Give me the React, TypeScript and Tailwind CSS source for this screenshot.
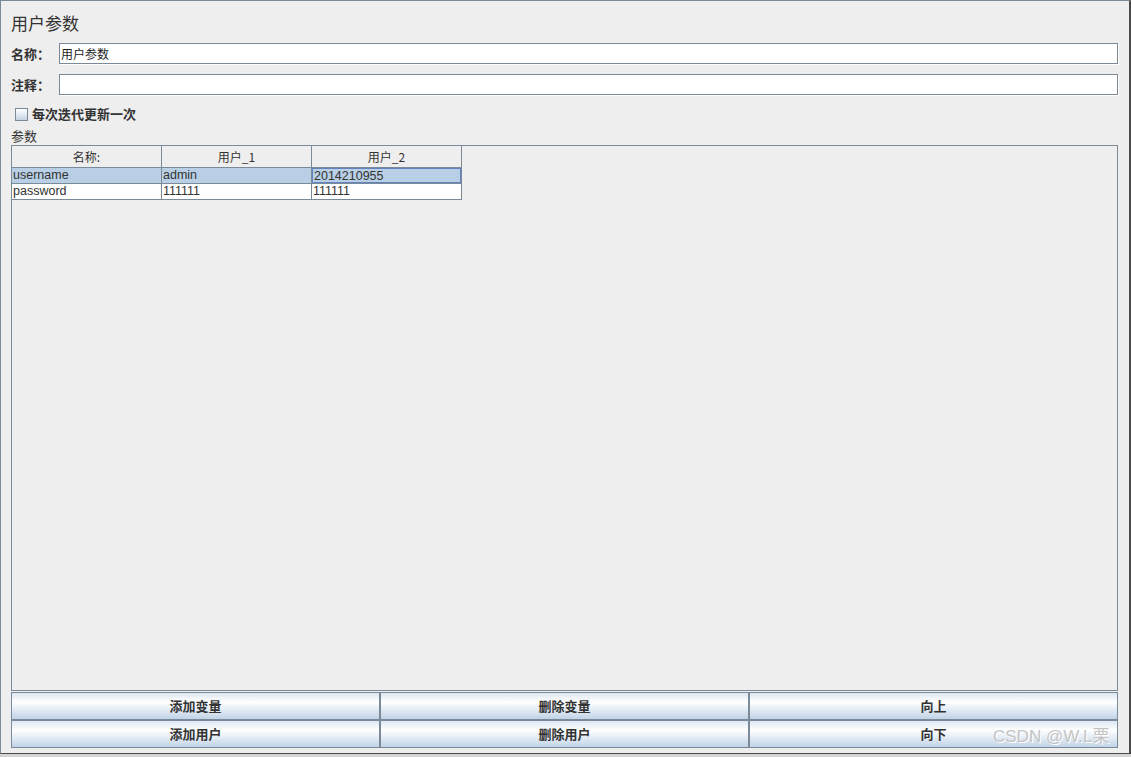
import React from 'react';

const cjk = 'font-["Noto_Sans_CJK_SC","Liberation_Sans",sans-serif]';
const latin = 'font-["Liberation_Sans","Noto_Sans_CJK_SC",sans-serif]';

const columns = ['名称:', '用户_1', '用户_2'];
const rows = [
  ['username', 'admin', '2014210955'],
  ['password', '111111', '111111'],
];

const buttons = ['添加变量', '删除变量', '向上', '添加用户', '删除用户', '向下'];

function Field({ label, value }: { label: string; value?: string }) {
  return (
    <div className="flex items-center h-[21px]">
      <div className={`w-[48px] text-[13px] font-bold text-[#333] ${cjk}`}>{label}</div>
      <div className={`flex-1 h-[21px] bg-white border border-[#7a8a99] shadow-[1px_1px_0_#ffffff] px-[1px] text-[12px] leading-[19px] text-[#222] ${cjk}`}>
        {value}
      </div>
    </div>
  );
}

export default function App() {
  return (
    <div className="relative w-[1131px] h-[757px] bg-[#d4d4d4] overflow-hidden">
      <div className="w-[1131px] h-[754px] bg-[#eeeeee] border-l border-t border-[#7a8a99] border-r-2 border-r-[#4a4a4a] border-b border-b-[#4a4a4a] flex flex-col pl-[10px] pr-[11px] pt-[12px]">
        <div className={`h-[20px] text-[17px] leading-[20px] text-[#333] ${cjk}`}>用户参数</div>

        <div className="mt-[10px]">
          <Field label="名称：" value="用户参数" />
        </div>
        <div className="mt-[10px]">
          <Field label="注释：" />
        </div>

        <div className="mt-[9px] h-[20px] flex items-center pl-[4px]">
          <div className="w-[13px] h-[13px] border border-[#7a8a99] bg-linear-to-b from-white to-[#c3d3e4]" />
          <span className={`ml-[4px] text-[13px] font-bold text-[#333] ${cjk}`}>每次迭代更新一次</span>
        </div>

        <div className={`mt-[4px] h-[16px] text-[13px] leading-[16px] text-[#333] ${cjk}`}>参数</div>

        <div className="mt-[1px] h-[546px] border border-[#7a8a99] bg-[#eeeeee]">
          <div className={`w-[450px] text-[12.5px] text-[#333] ${latin}`}>
            <div className="flex h-[22px] border-b border-[#7a8a99]">
              {columns.map((c) => (
                <div key={c} className={`w-[150px] border-r border-[#7a8a99] flex items-center justify-center text-[12px] leading-[21px] ${cjk}`}>
                  {c}
                </div>
              ))}
            </div>
            {rows.map((r, ri) => (
              <div key={ri} className={`flex h-[16px] border-b border-[#7a8a99] ${ri === 0 ? 'bg-[#b8cfe5]' : 'bg-white'}`}>
                {r.map((cell, ci) => (
                  <div key={ci} className="w-[150px] border-r border-[#7a8a99]">
                    <div className={`h-[15px] leading-[14px] pl-[1px] ${ri === 0 && ci === 2 ? 'border border-[#6382bf] pl-0' : ''}`}>
                      {cell}
                    </div>
                  </div>
                ))}
              </div>
            ))}
          </div>
        </div>

        <div className="mt-[1px] grid grid-cols-3">
          {buttons.map((b) => (
            <div
              key={b}
              className={`h-[28px] border border-[#7a8a99] bg-linear-to-b from-[#dde7f1] via-white via-35% to-[#c1d3e7] flex items-center justify-center text-[13px] font-bold text-[#333] ${cjk}`}
            >
              {b}
            </div>
          ))}
        </div>
      </div>

      <div className={`absolute left-[993px] top-[726px] text-[17px] leading-[22px] text-[#c4c4c4] [text-shadow:1px_1px_0_#ffffff] ${latin}`}>
        CSDN @W.L栗
      </div>
    </div>
  );
}
